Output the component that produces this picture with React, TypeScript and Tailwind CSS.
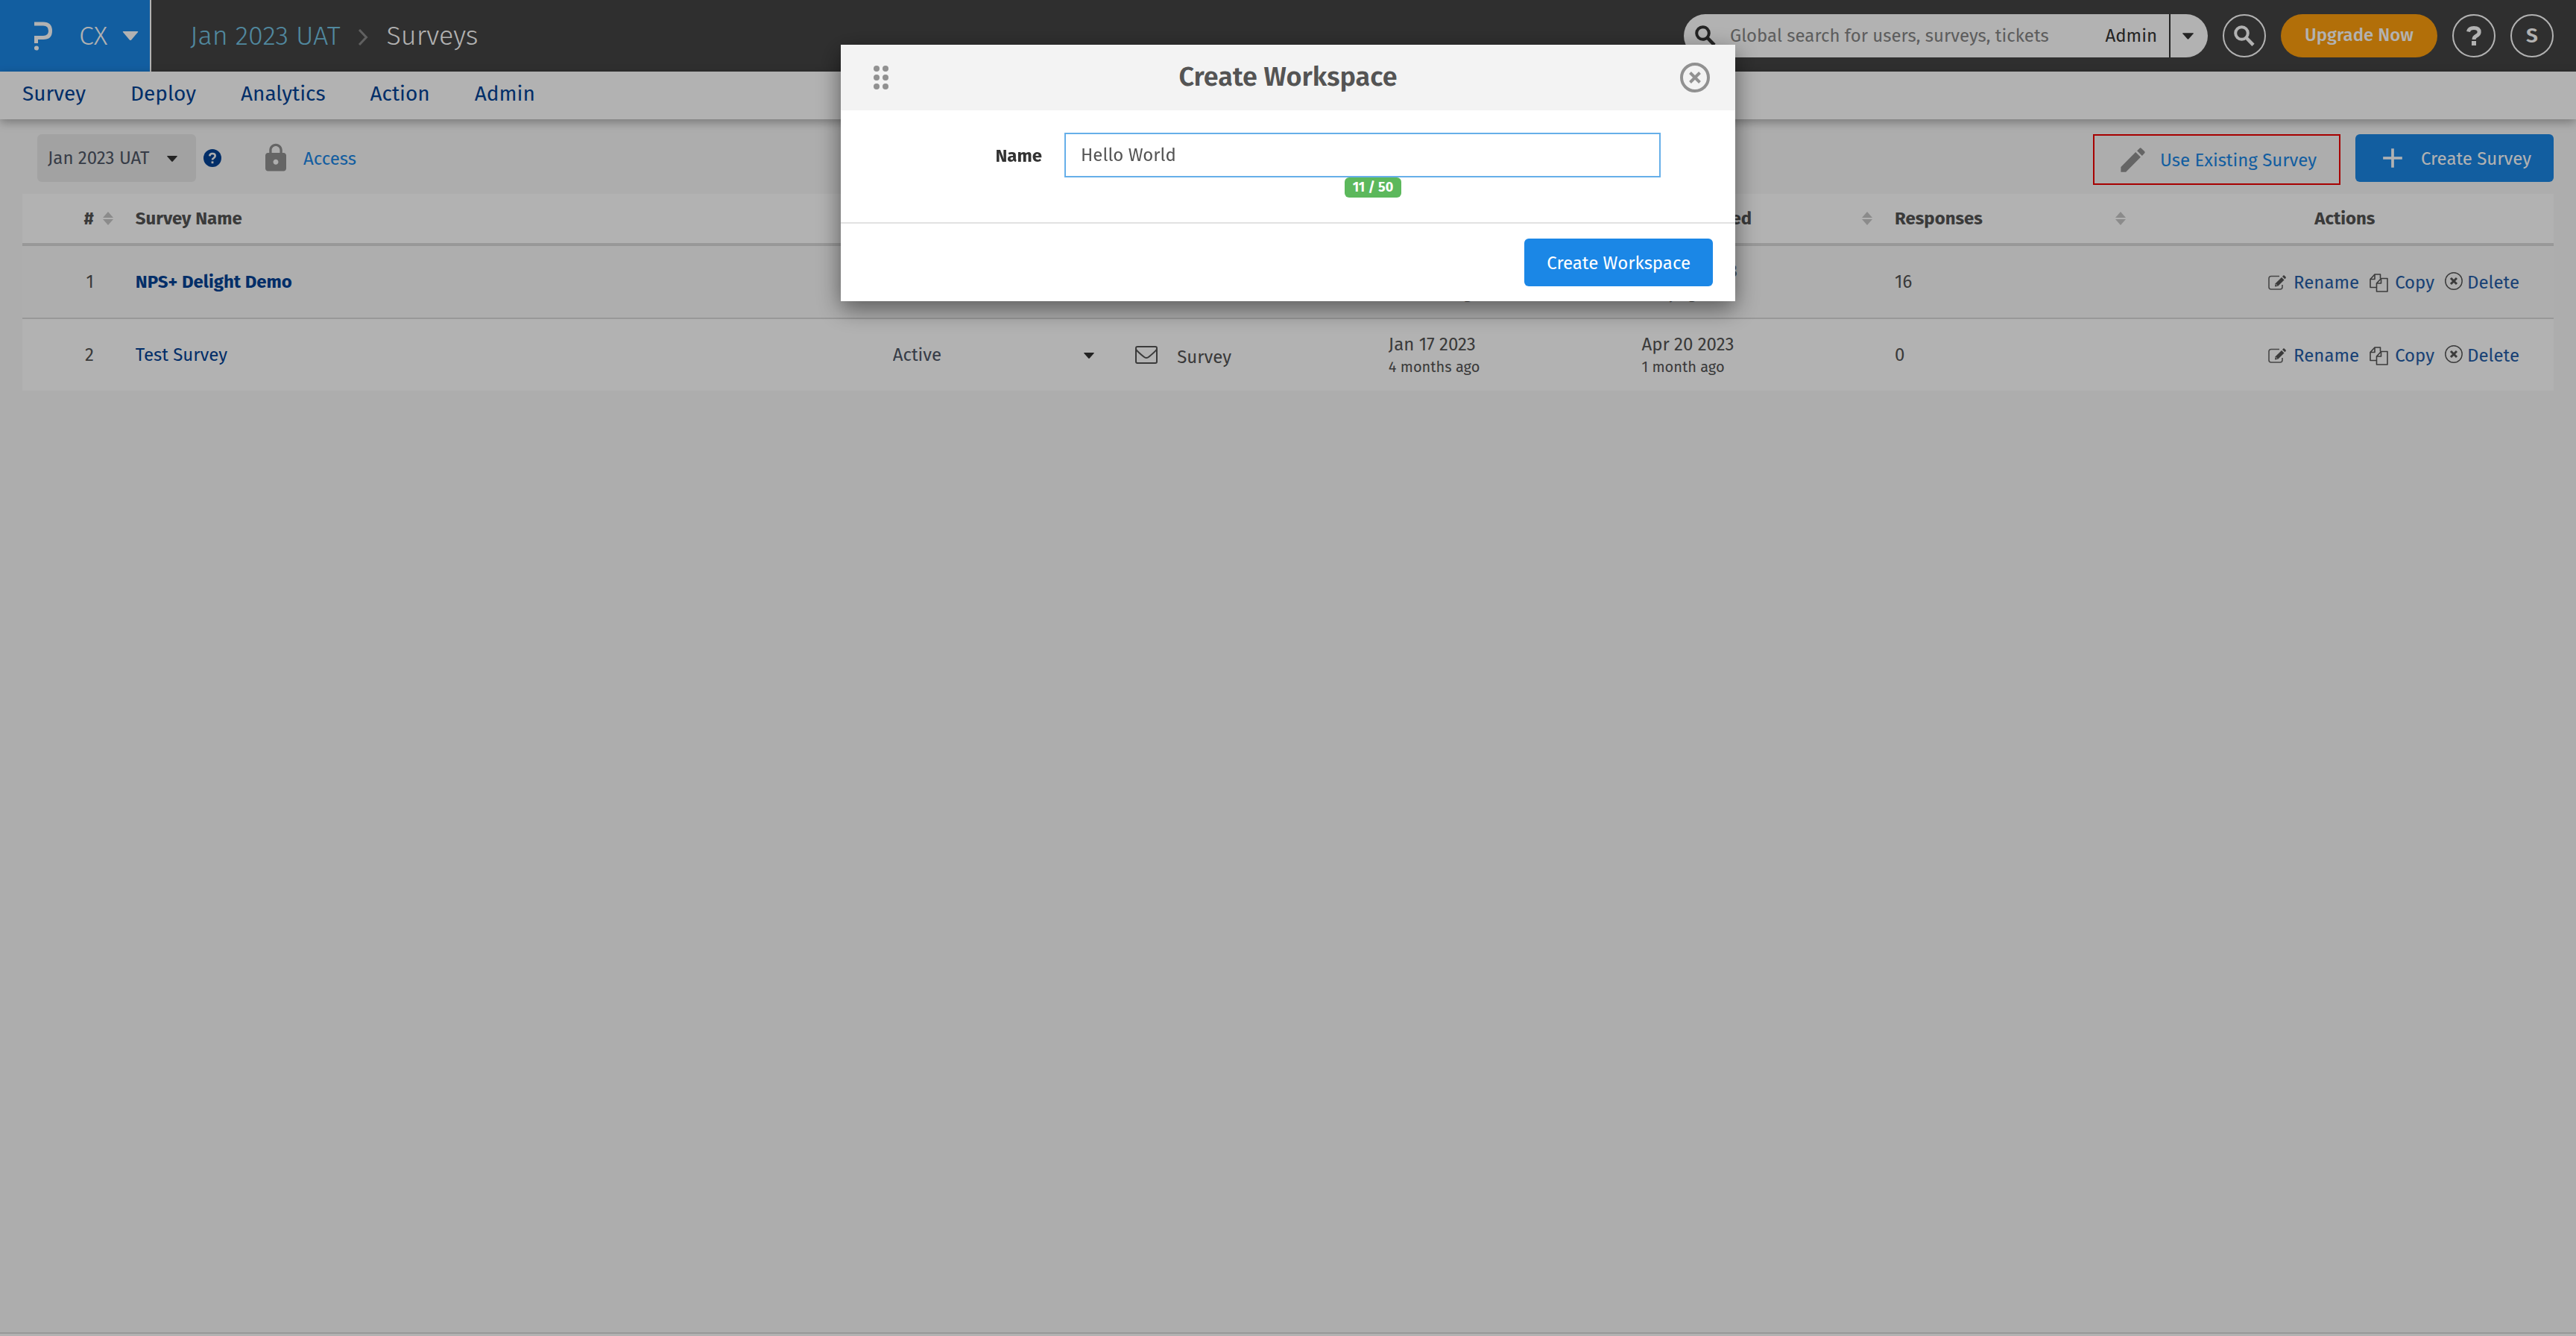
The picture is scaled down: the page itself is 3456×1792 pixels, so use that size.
import React, { useState } from "react";
import { MdAdd, MdEdit, MdLock } from "react-icons/md";

function Caret({ className }: { className: string }) {
  return (
    <svg viewBox="0 0 14 8" className={className} fill="currentColor" aria-hidden="true">
      <path d="M0.8 0H13.2Q14.3 0 13.6 0.9L7.8 7.6Q7 8.4 6.2 7.6L0.4 0.9Q-0.3 0 0.8 0Z" />
    </svg>
  );
}

function SearchIcon() {
  return (
    <svg viewBox="0 0 28 28" className="size-7" fill="none" stroke="currentColor" aria-hidden="true">
      <circle cx="10.500" cy="10.500" r="8.300" strokeWidth="4" />
      <path d="M16 16L26 26.300" strokeWidth="4.600" />
    </svg>
  );
}

function LogoMark() {
  return (
    <svg viewBox="0 0 24 39" className="h-[39px] w-6" aria-hidden="true">
      <path d="M0 3H12Q21.500 3 21.500 12.500Q21.500 21.500 12 21.500H2.500V29" fill="none" stroke="#fff" strokeWidth="5" />
      <circle cx="2.900" cy="35.500" r="3.100" fill="#fff" />
    </svg>
  );
}

function QuestionIcon() {
  return (
    <svg viewBox="0 0 20 26" className="h-[26px] w-5" aria-hidden="true">
      <path d="M2.500 7.500Q3.500 2.500 10 2.500Q17.200 2.500 17.200 8Q17.200 11 13.500 13Q10 14.800 10 18" fill="none" stroke="#fff" strokeWidth="5" />
      <rect x="7" y="20" width="6" height="6" fill="#fff" />
    </svg>
  );
}

function HelpDot() {
  return (
    <svg viewBox="0 0 24 24" className="size-6" aria-hidden="true">
      <circle cx="12" cy="12" r="12" fill="#044396" />
      <path d="M8.300 9.300Q8.500 6 12 6Q15.700 6 15.700 9.100Q15.700 10.900 13.700 12Q12 13 12 14.600" fill="none" stroke="#f8f8f8" strokeWidth="2.600" />
      <rect x="10.600" y="16.400" width="2.800" height="2.800" fill="#f8f8f8" />
    </svg>
  );
}

function SortIcon() {
  return (
    <svg viewBox="0 0 14 18" className="h-[18px] w-[14px] shrink-0" fill="#c8c8c8" aria-hidden="true">
      <path d="M7 0L14 8H0ZM7 18L0 10H14Z" />
    </svg>
  );
}

function RenameIcon() {
  return (
    <svg viewBox="0 0 24 20" className="h-5 w-6" aria-hidden="true">
      <path d="M15 1.500H4Q1 1.500 1 4.500V16Q1 19 4 19H16Q19 19 19 16V13" fill="none" stroke="#666" strokeWidth="1.600" />
      <path d="M9 15.500L9.700 11.200L18 2.900L21.500 6.400L13.200 14.700Z" fill="#555" />
      <path d="M19 1.900L20.300 0.600Q21 0 21.700 0.600L23.600 2.500Q24.200 3.200 23.600 3.900L22.400 5.300Z" fill="#555" />
      <path d="M10.400 12.300L12.300 14.200" stroke="#f8f8f8" strokeWidth="1" />
    </svg>
  );
}

function CopyIcon() {
  return (
    <svg viewBox="0 0 25 25" className="size-[25px]" fill="none" stroke="#555" strokeWidth="1.600" strokeLinejoin="round" aria-hidden="true">
      <path d="M9 18.500H1V7.500L7 1H14.500V6.500" />
      <path d="M7 1V7.500H1" />
      <path d="M15.500 6.500H24V24H9.500V13Z" />
      <path d="M15.500 6.500V13H9.500" />
    </svg>
  );
}

function DeleteIcon() {
  return (
    <svg viewBox="0 0 24 24" className="mb-1 size-6" fill="none" stroke="#555" aria-hidden="true">
      <circle cx="12" cy="12" r="11.200" strokeWidth="1.500" />
      <path d="M8 8L16 16M16 8L8 16" strokeWidth="3" />
    </svg>
  );
}

function MailIcon() {
  return (
    <svg viewBox="0 0 30 24" className="h-6 w-[30px]" fill="none" stroke="#555" strokeWidth="2" aria-hidden="true">
      <rect x="1" y="1" width="28" height="22" rx="2" />
      <path d="M1 4.500Q3 7.500 11.500 14.500Q15 17.500 18.500 14.500Q27 7.500 29 4.500" />
    </svg>
  );
}

const surveys = [
  { name: "NPS+ Delight Demo", bold: true, created: "Jan 17 2023", createdAgo: "4 months ago", modified: "May 24 2023", modifiedAgo: "1 day ago", responses: 16 },
  { name: "Test Survey", bold: false, created: "Jan 17 2023", createdAgo: "4 months ago", modified: "Apr 20 2023", modifiedAgo: "1 month ago", responses: 0 },
];

function TopBar() {
  return (
    <header className="flex h-24 items-center bg-[#444] pr-[30px] text-white">
      <button className="flex h-24 w-[203px] items-center border-r-2 border-white bg-[#1b87e6] pl-[46px] text-4xl font-light" aria-label="CX products">
        <LogoMark />
        <span className="ml-[36px]">CX</span>
        <Caret className="ml-[20px] h-3 w-[22px]" />
      </button>
      <nav className="ml-[52px] flex items-center text-4xl font-light" aria-label="Breadcrumb">
        <a href="#workspace" className="text-[#75c4e4]">Jan 2023 UAT</a>
        <svg viewBox="0 0 14 22" className="mx-6 mt-1 h-[22px] w-[14px]" fill="none" stroke="#8a8a8a" strokeWidth="3" aria-hidden="true">
          <path d="M2 1L11.500 11L2 21" />
        </svg>
        <span>Surveys</span>
      </nav>
      <div className="ml-auto flex items-center gap-5">
        <div className="flex h-[58px] w-[703px] overflow-hidden rounded-full bg-white text-2xl text-[#333]">
          <label htmlFor="global-search" className="flex items-center pl-[15px]" aria-label="Search">
            <SearchIcon />
          </label>
          <input
            id="global-search"
            placeholder="Global search for users, surveys, tickets"
            className="ml-[19px] min-w-0 flex-1 outline-none placeholder:text-[#868686]"
          />
          <button className="px-4">Admin</button>
          <button className="flex w-[52px] items-center justify-center border-l-2 border-[#333] pr-1" aria-label="Search scope">
            <Caret className="h-[9px] w-[15px]" />
          </button>
        </div>
        <button className="flex size-[58px] items-center justify-center rounded-full border-2 border-white" aria-label="Search">
          <SearchIcon />
        </button>
        <button className="h-[58px] w-[210px] rounded-full bg-[#ffa00e] pb-0.5 text-2xl font-medium">Upgrade Now</button>
        <button className="flex size-[58px] items-center justify-center rounded-full border-2 border-white" aria-label="Help">
          <QuestionIcon />
        </button>
        <button className="flex size-[58px] items-center justify-center rounded-full border-2 border-white text-[28px] font-semibold">S</button>
      </div>
    </header>
  );
}

function MainNav() {
  return (
    <nav className="relative flex h-16 gap-[60px] bg-white px-[30px] pt-[9px] text-[28px] leading-[42px] text-[#044396] shadow-[0_4px_12px_rgba(0,0,0,0.3)]">
      {["Survey", "Deploy", "Analytics", "Action", "Admin"].map((item) => (
        <a key={item} href={"#" + item.toLowerCase()}>{item}</a>
      ))}
    </nav>
  );
}

function Toolbar() {
  return (
    <div className="flex h-[100px] items-start pt-5 pr-[30px] pl-[50px] text-2xl">
      <div className="relative h-16 w-[213px] text-[#4f5766]">
        <select aria-label="Workspace" className="h-16 w-full appearance-none rounded-md bg-[#e8e8e8] pl-[14px]">
          <option>Jan 2023 UAT</option>
        </select>
        <Caret className="pointer-events-none absolute top-[29px] right-[25px] h-2 w-[14px] text-[#333]" />
      </div>
      <button className="ml-[10px] flex h-16 items-center" aria-label="Help">
        <HelpDot />
      </button>
      <a href="#access" className="ml-[52px] flex h-16 items-center text-[#1b87e6]">
        <MdLock className="size-[42px] text-[#919191]" />
        <span className="ml-4 pt-0.5">Access</span>
      </a>
      <button className="ml-auto flex h-[68px] w-[332px] items-center border-2 border-[#f00000] pl-[30px] text-[#1b87e6]">
        <MdEdit className="size-[43px] text-[#919191]" />
        <span className="ml-[15px] pt-0.5">Use Existing Survey</span>
      </button>
      <button className="ml-5 flex h-16 w-[266px] items-center rounded-md bg-[#1b87e6] pl-[28px] text-white">
        <MdAdd className="size-[44px]" />
        <span className="ml-4 pt-0.5">Create Survey</span>
      </button>
    </div>
  );
}

function SurveyTable() {
  const head = "h-[70px] border-b-4 border-[#dadada] px-4";
  return (
    <table className="w-full table-fixed border-separate border-spacing-0 text-2xl text-[#545454]">
      <colgroup>
        <col className="w-[4%]" />
        <col className="w-[29.5%]" />
        <col className="w-[10%]" />
        <col className="w-[10%]" />
        <col className="w-[10%]" />
        <col className="w-[10%]" />
        <col className="w-[10%]" />
        <col className="w-[16.5%]" />
      </colgroup>
      <thead>
        <tr className="bg-white text-left">
          <th className={head}>
            <span className="-mr-0.5 flex items-center justify-end gap-3"># <SortIcon /></span>
          </th>
          <th className={head}>Survey Name</th>
          <th className={head}>Status</th>
          <th className={head}>Type</th>
          {["Created", "Last Modified", "Responses"].map((label) => (
            <th key={label} className={head}>
              <span className="-mr-0.5 flex items-center justify-between">{label} <SortIcon /></span>
            </th>
          ))}
          <th className={head + " text-center"}>Actions</th>
        </tr>
      </thead>
      <tbody>
        {surveys.map((s, i) => {
          const cell = i === 0 ? "h-[98px] border-b-2 border-[#dadada] px-4" : "h-24 px-4";
          return (
            <tr key={s.name} className={i === 0 ? "bg-[#fafafa]" : "bg-white"}>
              <td className={cell + " text-right"}>
                <span className="pr-6">{i + 1}</span>
              </td>
              <td className={cell}>
                <a href={"#survey-" + (i + 1)} className={s.bold ? "font-bold text-[#044396]" : "text-[#044396]"}>{s.name}</a>
              </td>
              <td className={cell}>
                <div className="relative text-[#4f5766]">
                  <select aria-label={"Status of " + s.name} className="h-16 w-full appearance-none pl-[14px]">
                    <option>Active</option>
                    <option>Inactive</option>
                  </select>
                  <Caret className="pointer-events-none absolute top-[29px] right-[23px] h-2 w-[14px] text-[#333]" />
                </div>
              </td>
              <td className={cell}>
                <span className="flex items-center gap-[26px]">
                  <MailIcon />
                  <span className="pt-[5px]">Survey</span>
                </span>
              </td>
              <td className={cell}>
                <div className="leading-8">{s.created}</div>
                <div className="text-xl">{s.createdAgo}</div>
              </td>
              <td className={cell}>
                <div className="leading-8">{s.modified}</div>
                <div className="text-xl">{s.modifiedAgo}</div>
              </td>
              <td className={cell}>{s.responses}</td>
              <td className={cell}>
                <div className="flex justify-end gap-[14px] pt-0.5 pr-[30px] text-[#265ea8]">
                  <button className="flex items-center gap-[10px]"><RenameIcon />Rename</button>
                  <button className="flex items-center gap-[9px]"><CopyIcon />Copy</button>
                  <button className="flex items-center gap-[6px]"><DeleteIcon />Delete</button>
                </div>
              </td>
            </tr>
          );
        })}
      </tbody>
    </table>
  );
}

function CreateWorkspaceDialog() {
  const [name, setName] = useState("Hello World");
  return (
    <div className="fixed inset-0 flex items-start justify-center bg-black/30 pt-[60px]">
      <div role="dialog" aria-labelledby="dialog-title" className="w-[1200px] bg-white shadow-[0_10px_30px_rgba(0,0,0,0.5)]">
        <div className="flex h-[88px] items-center justify-between bg-[#f3f3f3] px-[34px]">
          <svg viewBox="0 0 20 32" className="h-8 w-10" fill="#919191" aria-hidden="true">
            {[4, 16, 28].map((y) => (
              <g key={y}>
                <circle cx="4" cy={y} r="4" />
                <circle cx="16" cy={y} r="4" />
              </g>
            ))}
          </svg>
          <h2 id="dialog-title" className="pb-0.5 text-4xl font-semibold text-[#545454]">Create Workspace</h2>
          <button aria-label="Close">
            <svg viewBox="0 0 40 40" className="size-10" fill="none" stroke="#919191" strokeWidth="4" aria-hidden="true">
              <circle cx="20" cy="20" r="18" />
              <path d="M13.500 13.500L26.500 26.500M26.500 13.500L13.500 26.500" />
            </svg>
          </button>
        </div>
        <div className="flex h-[152px] border-b-2 border-[#e2e2e2] pt-[30px] pr-[72px] text-2xl">
          <label htmlFor="workspace-name" className="w-[300px] pt-[15px] pr-[30px] text-right font-bold text-[#333]">Name</label>
          <div className="flex flex-1 flex-col items-center">
            <div className="w-full pr-7">
              <input
                id="workspace-name"
                value={name}
                maxLength={50}
                onChange={(e) => setName(e.target.value)}
                className="block h-[60px] w-full border-2 border-[#66afe9] px-5 text-[#545454] outline-none"
              />
            </div>
            <span className="rounded-md bg-[#5cb85c] px-[11px] text-lg leading-[27px] font-bold text-white">{name.length} / 50</span>
          </div>
        </div>
        <div className="flex justify-end py-5 pr-[30px]">
          <button className="h-16 rounded-md bg-[#1b87e6] px-[30px] pt-0.5 text-2xl text-white">Create Workspace</button>
        </div>
      </div>
    </div>
  );
}

export default function App() {
  return (
    <div className="flex min-h-screen flex-col bg-[#f8f8f8] font-['Fira_Sans','Noto_Sans',sans-serif]">
      <TopBar />
      <MainNav />
      <Toolbar />
      <main className="flex-1 px-[30px]">
        <SurveyTable />
      </main>
      <footer className="h-[5px] border-t-2 border-[#dadada] bg-white" />
      <CreateWorkspaceDialog />
    </div>
  );
}
